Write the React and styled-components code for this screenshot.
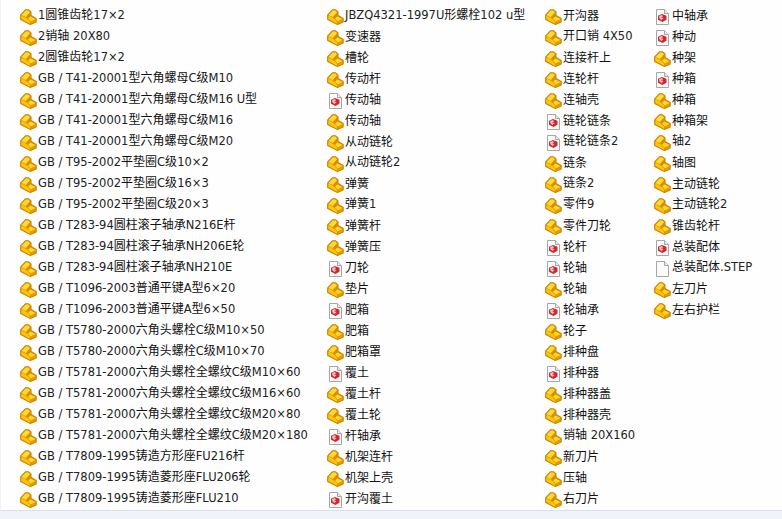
import React from 'react'
import styled, { createGlobalStyle } from 'styled-components'

const GlobalStyle = createGlobalStyle`
    html, body {
        margin: 0;
        padding: 0;
        background: #eff2f9;
    }
`
const Page = styled.div`
    width: 782px;
    height: 519px;
    overflow: hidden;
    background: linear-gradient(#e4e7f0, #f0f3fa 3px);
`
const Panel = styled.div`
    height: 511px;
    box-sizing: border-box;
    padding: 4px 0 0 19px;
    background: #fefefe;
    border-left: 1px solid #f1f2f6;
    border-bottom: 1px solid #dcdfe8;
    display: grid;
    grid-template-columns: 307px 218px 109px 1fr;
`
const Column = styled.ul`
    list-style: none;
    margin: 0;
    padding: 0;
`
const Row = styled.li`
    height: 21px;
    display: flex;
    align-items: center;
`
const IconSlot = styled.span`
    width: 18px;
    height: 21px;
    flex: none;
    display: flex;
    align-items: center;
    padding-top: 4px;
    box-sizing: border-box;
`
const Label = styled.span`
    color: #111;
    font-family: 'Noto Sans CJK SC', sans-serif;
    font-size: 12px;
    line-height: 21px;
    white-space: nowrap;
`
const Latin = styled.span`
    font-family: 'DejaVu Sans', sans-serif;
    font-size: 11.5px;
    color: #222;
`

function PartIcon() {
    return (
        <svg width="17" height="16" viewBox="0 0 17 16">
            <path d="M0.7 5.8 L5.4 0.8 L8.6 0.8 L11 3 L11 6.6 L16.2 9.6 L16.2 13 L10.4 15.5 L0.7 10.4 Z" fill="#e39600" stroke="#c98300" strokeWidth="1.1" strokeLinejoin="round" />
            <path d="M1.5 5.9 L5.7 1.6 L8.4 1.6 L10 3.2 L5.8 7.9 Z" fill="#ffdb38" />
            <path d="M6.2 8.2 L10.2 3.8 L10.2 7 L7.8 9.4 Z" fill="#d98c00" />
            <path d="M8.2 9.6 L10.4 7.4 L15.5 10 L10.6 12.4 Z" fill="#ffd92e" />
            <path d="M1.4 6.6 L5.6 8.8 L7.8 10.2 L10 12.8 L10 14.7 L1.4 10 Z" fill="#ffc40c" />
            <path d="M10.8 13 L15.6 10.6 L15.6 12.6 L10.8 14.8 Z" fill="#e89c00" />
        </svg>
    )
}

function DocIcon({ blank }) {
    return (
        <svg width="16" height="16" viewBox="0 0 16 16">
            <path d="M2.5 0.5 H10.5 L14.5 4.5 V15.5 H2.5 Z" fill="#fbfbfb" stroke="#a6a6a6" />
            <path d="M10.5 0.5 V4.5 H14.5" fill="#e8e8e8" stroke="#a6a6a6" />
            {!blank && (
                <>
                    <path d="M4 6.8 L8 5 L12.5 6.8 L12.5 10.8 L8.5 13 L4 10.8 Z" fill="#d3262e" />
                    <path d="M5 7 L8 6 L9 7.5 L7 8.5 L9.5 9 L7.5 11 L5.5 9.5 Z" fill="#f6c0c0" />
                </>
            )}
        </svg>
    )
}

// the latin runs sit in a different font from the chinese ones
function Name({ text }) {
    const parts = text.split(/([\x20-\x7e×]+)/).filter(Boolean)
    return (
        <Label>
            {parts.map((part, i) => (
                /[\x20-\x7e×]/.test(part) ? <Latin key={i}>{part}</Latin> : <span key={i}>{part}</span>
            ))}
        </Label>
    )
}

function Entry({ name, type }) {
    return (
        <Row>
            <IconSlot>
                {type === 'doc' && <DocIcon />}
                {type === 'blank' && <DocIcon blank />}
                {!type && <PartIcon />}
            </IconSlot>
            <Name text={name} />
        </Row>
    )
}

const columns = [
    [
        { name: '1圆锥齿轮17×2' },
        { name: '2销轴 20X80' },
        { name: '2圆锥齿轮17×2' },
        { name: 'GB / T41-20001型六角螺母C级M10' },
        { name: 'GB / T41-20001型六角螺母C级M16 U型' },
        { name: 'GB / T41-20001型六角螺母C级M16' },
        { name: 'GB / T41-20001型六角螺母C级M20' },
        { name: 'GB / T95-2002平垫圈C级10×2' },
        { name: 'GB / T95-2002平垫圈C级16×3' },
        { name: 'GB / T95-2002平垫圈C级20×3' },
        { name: 'GB / T283-94圆柱滚子轴承N216E杆' },
        { name: 'GB / T283-94圆柱滚子轴承NH206E轮' },
        { name: 'GB / T283-94圆柱滚子轴承NH210E' },
        { name: 'GB / T1096-2003普通平键A型6×20' },
        { name: 'GB / T1096-2003普通平键A型6×50' },
        { name: 'GB / T5780-2000六角头螺栓C级M10×50' },
        { name: 'GB / T5780-2000六角头螺栓C级M10×70' },
        { name: 'GB / T5781-2000六角头螺栓全螺纹C级M10×60' },
        { name: 'GB / T5781-2000六角头螺栓全螺纹C级M16×60' },
        { name: 'GB / T5781-2000六角头螺栓全螺纹C级M20×80' },
        { name: 'GB / T5781-2000六角头螺栓全螺纹C级M20×180' },
        { name: 'GB / T7809-1995铸造方形座FU216杆' },
        { name: 'GB / T7809-1995铸造菱形座FLU206轮' },
        { name: 'GB / T7809-1995铸造菱形座FLU210' },
    ],
    [
        { name: 'JBZQ4321-1997U形螺栓102 u型' },
        { name: '变速器' },
        { name: '槽轮' },
        { name: '传动杆' },
        { name: '传动轴', type: 'doc' },
        { name: '传动轴' },
        { name: '从动链轮' },
        { name: '从动链轮2' },
        { name: '弹簧' },
        { name: '弹簧1' },
        { name: '弹簧杆' },
        { name: '弹簧压' },
        { name: '刀轮', type: 'doc' },
        { name: '垫片' },
        { name: '肥箱', type: 'doc' },
        { name: '肥箱' },
        { name: '肥箱罩' },
        { name: '覆土', type: 'doc' },
        { name: '覆土杆' },
        { name: '覆土轮' },
        { name: '杆轴承', type: 'doc' },
        { name: '机架连杆' },
        { name: '机架上壳' },
        { name: '开沟覆土', type: 'doc' },
    ],
    [
        { name: '开沟器' },
        { name: '开口销 4X50' },
        { name: '连接杆上' },
        { name: '连轮杆' },
        { name: '连轴壳' },
        { name: '链轮链条', type: 'doc' },
        { name: '链轮链条2', type: 'doc' },
        { name: '链条' },
        { name: '链条2' },
        { name: '零件9' },
        { name: '零件刀轮' },
        { name: '轮杆', type: 'doc' },
        { name: '轮轴', type: 'doc' },
        { name: '轮轴' },
        { name: '轮轴承', type: 'doc' },
        { name: '轮子' },
        { name: '排种盘' },
        { name: '排种器', type: 'doc' },
        { name: '排种器盖' },
        { name: '排种器壳' },
        { name: '销轴 20X160' },
        { name: '新刀片' },
        { name: '压轴' },
        { name: '右刀片' },
    ],
    [
        { name: '中轴承', type: 'doc' },
        { name: '种动', type: 'doc' },
        { name: '种架' },
        { name: '种箱', type: 'doc' },
        { name: '种箱' },
        { name: '种箱架' },
        { name: '轴2' },
        { name: '轴图' },
        { name: '主动链轮' },
        { name: '主动链轮2' },
        { name: '锥齿轮杆' },
        { name: '总装配体', type: 'doc' },
        { name: '总装配体.STEP', type: 'blank' },
        { name: '左刀片' },
        { name: '左右护栏' },
    ],
]

export default function App() {
    return (
        <Page>
            <GlobalStyle />
            <Panel>
                {columns.map((entries, i) => (
                    <Column key={i}>
                        {entries.map((entry, j) => (
                            <Entry key={j} name={entry.name} type={entry.type} />
                        ))}
                    </Column>
                ))}
            </Panel>
        </Page>
    )
}
